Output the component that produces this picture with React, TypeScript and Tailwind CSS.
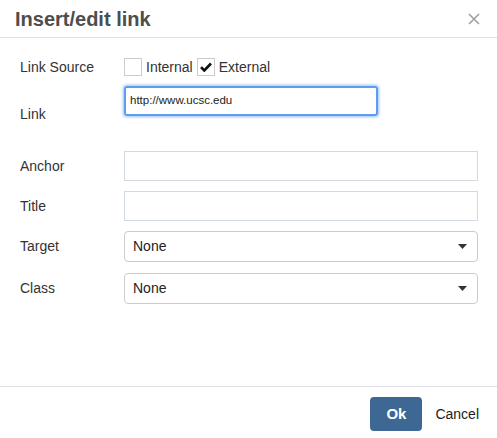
import React from 'react';

const Caret: React.FC = () => (
  <svg width="9" height="5" viewBox="0 0 9 5" className="shrink-0">
    <path d="M0 0 H9 L4.5 5 Z" fill="#333" />
  </svg>
);

const App: React.FC = () => {
  return (
    <div className="w-[497px] h-[438px] flex flex-col bg-white text-[#333] font-['Liberation_Sans',Arial,sans-serif]">
      {/* Header */}
      <div className="h-[38px] border-b border-[#dde1e6] flex items-center justify-between pl-[15px] pr-[17px]">
        <h1 className="text-[20px] font-bold text-[#4d4d4d] leading-none">Insert/edit link</h1>
        <svg width="12" height="12" viewBox="0 0 12 12">
          <path d="M1 1 L11 11 M11 1 L1 11" stroke="#a0a0a0" strokeWidth="1.6" />
        </svg>
      </div>

      {/* Body */}
      <div className="flex-1 pl-[20px] pr-[19px] pt-[20px] text-[14px]">
        <div className="flex items-center h-[18px]">
          <span className="w-[104px]">Link Source</span>
          <span className="w-[18px] h-[18px] border border-[#ccc] bg-white" />
          <span className="ml-[4px] mr-[4px]">Internal</span>
          <span className="w-[18px] h-[18px] border border-[#ccc] bg-white flex items-center justify-center">
            <svg width="12" height="10" viewBox="0 0 12 10">
              <path d="M1 5.2 L4.3 8.5 L11 1.5" stroke="#111" strokeWidth="2.6" fill="none" />
            </svg>
          </span>
          <span className="ml-[4px]">External</span>
        </div>

        <div className="flex items-start h-[30px] mt-[10px]">
          <span className="w-[104px] mt-[19px] leading-[18px]">Link</span>
          <div className="w-[254px] h-[30px] rounded-[3px] border-2 border-[#5d9cf0] shadow-[0_0_3px_1px_rgba(80,150,240,0.6)] flex items-center pl-[4px] text-[11.5px] text-[#222]">
            http://www.ucsc.edu
          </div>
        </div>

        <div className="flex items-center mt-[35px]">
          <span className="w-[104px]">Anchor</span>
          <div className="flex-1 h-[30px] border border-[#d3d9e0]" />
        </div>

        <div className="flex items-center mt-[10px]">
          <span className="w-[104px]">Title</span>
          <div className="flex-1 h-[30px] border border-[#d3d9e0]" />
        </div>

        <div className="flex items-center mt-[10px]">
          <span className="w-[104px]">Target</span>
          <div className="flex-1 h-[31px] rounded-[4px] border border-[#ccc] flex items-center justify-between pl-[8px] pr-[10px] text-[#222]">
            None
            <Caret />
          </div>
        </div>

        <div className="flex items-center mt-[11px]">
          <span className="w-[104px]">Class</span>
          <div className="flex-1 h-[31px] rounded-[4px] border border-[#ccc] flex items-center justify-between pl-[8px] pr-[10px] text-[#222]">
            None
            <Caret />
          </div>
        </div>
      </div>

      {/* Footer */}
      <div className="h-[52px] border-t border-[#dde1e6] flex items-start justify-end pt-[10px] pr-[18px] gap-[13px]">
        <button className="w-[52px] h-[34px] rounded-[4px] bg-[#3e6894] text-white font-bold text-[15px]">Ok</button>
        <span className="h-[34px] flex items-center text-[14px] text-[#222]">Cancel</span>
      </div>
    </div>
  );
};

export default App;
